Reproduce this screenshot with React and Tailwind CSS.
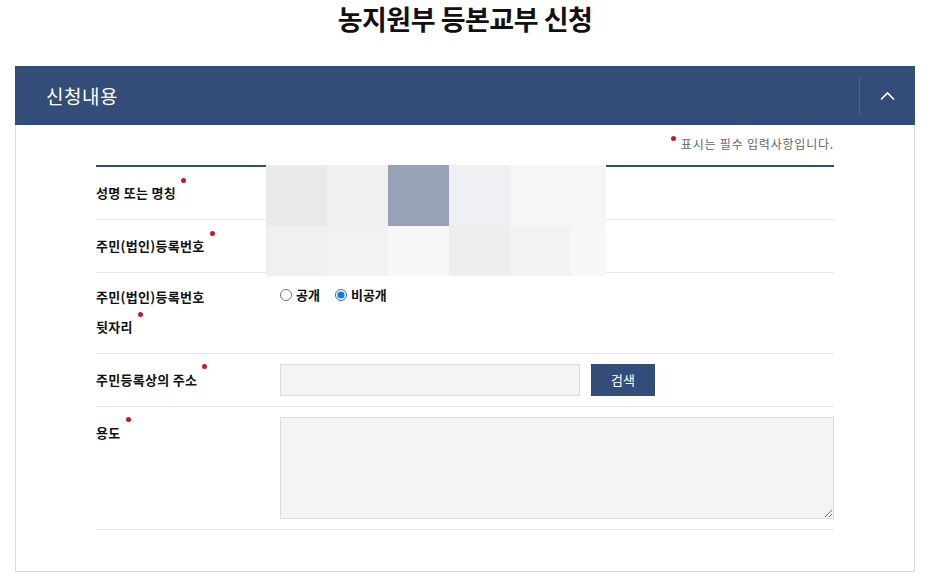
import React from "react";

const mosaic = [
  ["#e9eaec", "#eff0f2", "#97a2b7", "#eef0f3", "#f6f6f7", "#f6f6f7"],
  ["#f0f0f0", "#f2f2f2", "#f7f7f7", "#eeeeee", "#f3f3f3", "#f8f8f8"],
];
const mosaicWidths = ["w-[61px]", "w-[61px]", "w-[61px]", "w-[61px]", "w-[61px]", "w-[35px]"];

function Dot() {
  return <span className="inline-block align-top mt-0 ml-[5px] w-[5px] h-[5px] rounded-full bg-[#c9171e]" />;
}

function Row({ label, children }) {
  return (
    <div className="flex border-b border-[#e6e6e6] pt-[11px] pb-[11px]">
      <div className="w-[184px] shrink-0 text-[13px] font-bold leading-[30px] text-[#111] tracking-[0.3px]">{label}</div>
      <div className="flex-1">{children}</div>
    </div>
  );
}

export default function App() {
  return (
    <div className="w-[934px] h-[584px] bg-white font-['Noto_Sans_CJK_KR','Noto_Sans',sans-serif] overflow-hidden">
      <h1 className="text-center text-[27px] font-bold leading-[36px] pt-[1px] pr-[4px] text-[#111] tracking-[-0.5px]">
        농지원부 등본교부 신청
      </h1>

      <section className="ml-[15px] mt-[29px] w-[900px]">
        <div className="flex items-center h-[59px] bg-[#344c78]">
          <h2 className="flex-1 pl-[31px] text-[19px] text-white leading-none tracking-[0.5px]">신청내용</h2>
          <div className="w-px h-[40px] bg-[#4b6190]" />
          <button className="w-[55px] h-full flex items-center justify-center text-white">
            <svg width="15" height="10" viewBox="0 0 15 10" fill="none" stroke="currentColor" strokeWidth="1.6">
              <polyline points="1,8.5 7.5,2 14,8.5" />
            </svg>
          </button>
        </div>

        <div className="border border-t-0 border-[#dcdcdc] h-[447px] px-[80px] pt-[9px]">
          <p className="text-right text-[12px] text-[#666] leading-[20px] tracking-[0.8px]">
            <span className="inline-block align-top w-[5px] h-[5px] rounded-full bg-[#c9171e] mr-[5px] mt-[2px]" />
            표시는 필수 입력사항입니다.
          </p>

          <div className="relative mt-[11px] border-t-2 border-[#344c78]">
            <div className="absolute left-[170px] top-[-2px] flex flex-col">
              {mosaic.map((r, i) => (
                <div key={i} className={"flex " + (i === 0 ? "h-[61px]" : "h-[50px]")}>
                  {r.map((c, j) => (
                    <div key={j} className={mosaicWidths[j] + " h-full"} style={{ background: c }} />
                  ))}
                </div>
              ))}
            </div>

            <Row label={<>성명 또는 명칭<Dot /></>} />
            <Row label={<>주민(법인)등록번호<Dot /></>} />
            <div className="flex border-b border-[#e6e6e6] pt-[9px] pb-[11px]">
              <div className="w-[184px] shrink-0 text-[13px] font-bold leading-[30px] text-[#111] tracking-[0.3px]">
                주민(법인)등록번호
                <br />
                뒷자리<Dot />
              </div>
              <div className="flex-1 flex items-start gap-[15px] pt-[3px] text-[13px] font-bold text-[#111]">
                <label className="flex items-center gap-[4px]">
                  <input type="radio" name="open" className="w-[12px] h-[12px] m-0" />
                  공개
                </label>
                <label className="flex items-center gap-[4px]">
                  <input type="radio" name="open" defaultChecked className="w-[12px] h-[12px] m-0 accent-[#1a73e8]" />
                  비공개
                </label>
              </div>
            </div>
            <div className="flex border-b border-[#e6e6e6] pt-[10px] pb-[10px]">
              <div className="w-[184px] shrink-0 text-[13px] font-bold leading-[32px] text-[#111] tracking-[0.3px]">
                주민등록상의 주소<Dot />
              </div>
              <div className="flex-1 flex gap-[11px]">
                <input type="text" className="w-[300px] h-[32px] bg-[#f4f4f4] border border-[#dddddd] outline-none" />
                <button className="w-[64px] h-[32px] bg-[#344c78] text-white text-[13px]">검색</button>
              </div>
            </div>
            <div className="flex border-b border-[#e6e6e6] pt-[10px] pb-[10px]">
              <div className="w-[184px] shrink-0 text-[13px] font-bold leading-[32px] text-[#111] tracking-[0.3px]">
                용도<Dot />
              </div>
              <div className="flex-1">
                <textarea className="block w-full h-[102px] bg-[#f4f4f4] border border-[#dddddd] outline-none" />
              </div>
            </div>
          </div>
        </div>
      </section>
    </div>
  );
}
